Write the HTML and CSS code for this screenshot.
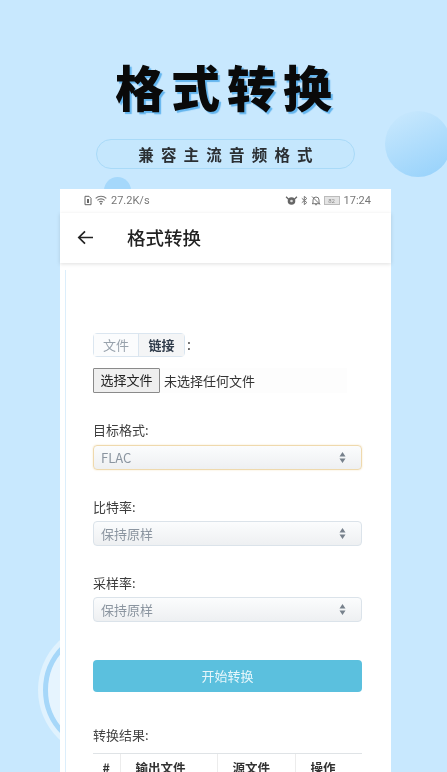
FILE: index.html
```html
<!DOCTYPE html>
<html lang="zh-CN">
<head>
<meta charset="utf-8">
<title>格式转换</title>
<link rel="stylesheet" href="styles.css">
</head>
<body>
<div class="screen">
  <div class="bubble bubble-right"></div>
  <div class="bubble bubble-small"></div>
  <div class="ring"></div>
  <h1 class="headline">格式转换</h1>
  <div class="pill">兼容主流音频格式</div>
  <main class="phone">
    <div class="status">
      <div class="status-side">
        <svg class="ico" width="8" height="11" viewBox="0 0 8 10"><path d="M1 .8h4l2 2v6.400H1z" fill="none" stroke="#666" stroke-width="1"/><rect x="3" y="3.500" width="2" height="4" fill="#666"/></svg>
        <svg class="ico" width="12" height="10" viewBox="0 0 11 9"><path d="M.6 3a7 7 0 0 1 9.800 0M2.200 4.800a4.700 4.700 0 0 1 6.600 0M3.800 6.500a2.400 2.400 0 0 1 3.400 0" fill="none" stroke="#777" stroke-width="1"/><circle cx="5.500" cy="8" r=".9" fill="#777"/></svg>
        <span class="speed">27.2K/s</span>
      </div>
      <div class="status-side">
        <svg class="ico" width="13" height="11" viewBox="0 0 12 10"><circle cx="6" cy="5.500" r="3.500" fill="#666"/><path d="M1 1.500 3.500 4M11 1.500 8.500 4" stroke="#666" stroke-width="1.200"/><circle cx="6" cy="5.500" r="1.200" fill="#ddd"/></svg>
        <svg class="ico" width="7" height="11" viewBox="0 0 7 10"><path d="M.8 2.800 5.800 7 3.300 9.200V.8L5.800 3 .8 7.200" fill="none" stroke="#777" stroke-width="1"/></svg>
        <svg class="ico" width="10" height="11" viewBox="0 0 10 10"><path d="M2 7.500V4.500a3 3 0 0 1 6 0v3l1 .7H1zM4 9.200h2M1 1l8 8" fill="none" stroke="#777" stroke-width="1"/></svg>
        <span class="battery">82</span>
        <span class="clock">17:24</span>
      </div>
    </div>
    <header class="appbar">
      <svg class="back" width="17" height="15" viewBox="0 0 17 15"><path d="M16 7.500H2M8 1.300 1.800 7.500 8 13.700" fill="none" stroke="#222" stroke-width="1.700"/></svg>
      <span class="appbar-title">格式转换</span>
    </header>
    <section class="content">
      <div class="tabs-row">
        <div class="tabs">
          <span class="tab tab-muted">文件</span>
          <span class="tab tab-active">链接</span>
        </div>
        <span class="colon">:</span>
      </div>
      <div class="file-row">
        <span class="file-btn">选择文件</span>
        <span class="file-text">未选择任何文件</span>
      </div>
      <div class="field field-first">
        <label class="field-label">目标格式:</label>
        <div class="select select-focus"><span>FLAC</span><svg width="7" height="13" viewBox="0 0 7 13"><path d="M3.500 1 6.500 5.500H.5zM3.500 12 .5 7.500h6z" fill="#77818c"/></svg></div>
      </div>
      <div class="field">
        <label class="field-label">比特率:</label>
        <div class="select"><span>保持原样</span><svg width="7" height="13" viewBox="0 0 7 13"><path d="M3.500 1 6.500 5.500H.5zM3.500 12 .5 7.500h6z" fill="#77818c"/></svg></div>
      </div>
      <div class="field">
        <label class="field-label">采样率:</label>
        <div class="select"><span>保持原样</span><svg width="7" height="13" viewBox="0 0 7 13"><path d="M3.500 1 6.500 5.500H.5zM3.500 12 .5 7.500h6z" fill="#77818c"/></svg></div>
      </div>
      <div class="start">开始转换</div>
      <div class="result-label">转换结果:</div>
      <table class="result">
        <thead>
          <tr><th class="c1">#</th><th class="c2">输出文件</th><th class="c3">源文件</th><th class="c4">操作</th></tr>
        </thead>
      </table>
    </section>
  </main>
</div>
</body>
</html>
```
FILE: styles.css
```css
* { box-sizing: border-box; }
html, body { margin: 0; padding: 0; }
body {
  width: 447px;
  height: 772px;
  overflow: hidden;
  font-family: "Noto Sans CJK SC", "Noto Sans", sans-serif;
}
.screen {
  position: relative;
  width: 447px;
  height: 772px;
  overflow: hidden;
  background: #c8e8fe;
  display: flex;
  flex-direction: column;
  align-items: center;
  padding-top: 55px;
  filter: blur(0.55px);
}
.bubble { position: absolute; border-radius: 50%; }
.bubble-right {
  left: 385px; top: 111px; width: 66px; height: 66px;
  background: linear-gradient(155deg, #c6e7fd 10%, #97d2fb 95%);
}
.bubble-small {
  left: 104px; top: 177px; width: 27px; height: 27px;
  background: #a5d8fb;
}
.ring {
  position: absolute;
  left: 43px; top: 627px; width: 126px; height: 126px;
  border-radius: 50%;
  background: #e6f4fe;
  border: 5px solid #a6d7f9;
  box-shadow: 0 0 0 5px #e0f2fe;
}
.headline {
  margin: 0 -7px 0 0;
  font-size: 49px;
  line-height: 62px;
  font-weight: 900;
  letter-spacing: 7px;
  color: #0a0a0a;
  text-shadow: 2px 2px 1px #62b4ee;
  position: relative;
}
.pill {
  position: relative;
  margin: 22px 0 0 4px;
  width: 259px;
  height: 30px;
  border: 1px solid #a9daf8;
  border-radius: 15px;
  background: #c5e7fd;
  font-size: 15.500px;
  font-weight: 700;
  letter-spacing: 7.200px;
  line-height: 28px;
  text-align: center;
  color: #2b2f33;
  padding-left: 7px;
}
.phone {
  position: relative;
  margin-top: 20px;
  width: 331px;
  flex: 1;
  background: #fff;
  display: flex;
  flex-direction: column;
  min-height: 0;
  align-self: flex-start;
  margin-left: 60px;
}
.status {
  height: 24px;
  padding: 0 20px 2px 24px;
  display: flex;
  justify-content: space-between;
  align-items: center;
  font-family: "Roboto", sans-serif;
  font-size: 11px;
  color: #777;
}
.status-side { display: flex; align-items: center; gap: 3px; }
.speed { margin-left: 1px; }
.battery {
  width: 16px; height: 9px;
  border: 1px solid #bbb;
  background: #e4e4e4;
  font-size: 6px;
  line-height: 7px;
  text-align: center;
  color: #888;
}
.clock { margin-left: 1px; }
.appbar {
  height: 50px;
  padding: 0 0 2px 17px;
  display: flex;
  align-items: center;
  box-shadow: 0 1px 4px rgba(0, 0, 0, .13);
  position: relative;
}
.back { flex: none; }
.appbar-title {
  margin-left: 33px;
  font-size: 18.500px;
  font-weight: 500;
  color: #222;
}
.content {
  flex: 1;
  min-height: 0;
  overflow: hidden;
  margin: 7px 0 0 5px;
  border-left: 1px solid #dceefb;
  padding: 63px 28px 0 27px;
  color: #333;
}
.tabs-row { display: flex; align-items: center; height: 24px; }
.tabs {
  display: flex;
  height: 24px;
  border: 1px solid #dbe6f0;
  border-radius: 4px;
  font-size: 13px;
  line-height: 22px;
  background: #fff;
}
.tab { width: 45px; text-align: center; }
.tab-muted { color: #98a2ac; border-right: 1px solid #dbe6f0; background: #fbfcfd; }
.tab-active { color: #2f3b4a; font-weight: 700; background: #f4f5f6; }
.colon { margin: -3px 0 0 2px; font-size: 14px; color: #444; }
.file-row {
  display: flex;
  align-items: center;
  height: 25px;
  margin-top: 11px;
  width: 254px;
  background: #fdfdfd;
  font-size: 13px;
  color: #333;
}
.file-btn {
  width: 67px;
  height: 25px;
  line-height: 22px;
  text-align: center;
  background: #efefef;
  border: 1px solid #8a8a8a;
  border-radius: 1px;
  color: #222;
}
.file-text { margin-left: 4px; }
.field { margin-top: 26px; }
.field-label {
  display: block;
  height: 26px;
  font-size: 13px;
  line-height: 22px;
  color: #3d3d3d;
}
.field-first .field-label { height: 27px; }
.select {
  display: flex;
  justify-content: space-between;
  align-items: center;
  width: 269px;
  height: 25px;
  margin-top: -1px;
  padding: 0 15px 0 7px;
  border: 1px solid #dbe3ea;
  border-radius: 4px;
  background: linear-gradient(#fbfcfd, #eef0f2);
  font-size: 13px;
  color: #8b95a0;
}
.select-focus { border-color: #efd9ad; box-shadow: 0 0 2px #f3e2c0; }
.start {
  width: 269px;
  height: 32px;
  margin-top: 38px;
  background: #5bc0de;
  border-radius: 4px;
  color: #e6f6fb;
  text-align: center;
  font-size: 13px;
  line-height: 32px;
}
.result-label {
  margin-top: 32px;
  font-size: 13px;
  line-height: 22px;
  color: #444;
}
.result {
  width: 269px;
  margin-top: 7px;
  border-collapse: collapse;
  table-layout: fixed;
  font-size: 12.500px;
  color: #333;
}
.result th {
  height: 28px;
  border-top: 1px solid #dfe3e6;
  border-left: 1px solid #ececec;
  font-weight: 700;
  text-align: left;
  padding: 0 0 0 15px;
}
.result th:first-child { border-left: 0; padding: 0; text-align: center; }
.c1 { width: 27px; }
.c2 { width: 97px; }
.c3 { width: 78px; }
.c4 { width: 67px; }
```
